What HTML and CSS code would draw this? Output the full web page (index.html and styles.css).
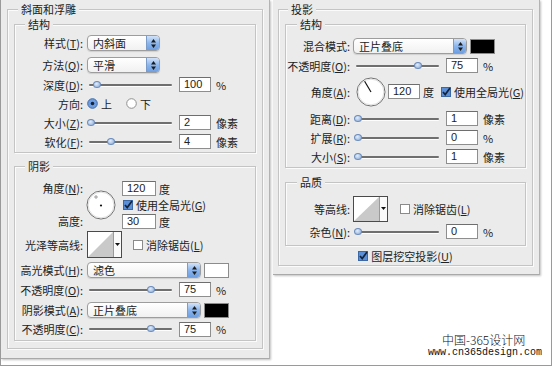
FILE: index.html
```html
<!DOCTYPE html>
<html>
<head>
    <meta charset="utf-8">
    <title>图层样式</title>
    <link rel="stylesheet" href="styles.css">
</head>
<body>
<div class="page">
    <div class="panel panel-left">
        <fieldset class="outer">
            <legend>斜面和浮雕</legend>

            <fieldset class="sub sub-bevel">
                <legend>结构</legend>
                <div class="row row-select first">
                    <span class="lbl">样式(<u>T</u>):</span>
                    <div class="select sel-short"><span class="sel-text">内斜面</span><span class="sel-btn"><svg width="5" height="9" viewBox="0 0 5 9"><path d="M0 3.6 L2.5 0 L5 3.6Z M0 5.4 L2.5 9 L5 5.4Z" fill="#1c1c1c"/></svg></span></div>
                </div>
                <div class="row row-select">
                    <span class="lbl">方法(<u>Q</u>):</span>
                    <div class="select sel-short"><span class="sel-text">平滑</span><span class="sel-btn"><svg width="5" height="9" viewBox="0 0 5 9"><path d="M0 3.6 L2.5 0 L5 3.6Z M0 5.4 L2.5 9 L5 5.4Z" fill="#1c1c1c"/></svg></span></div>
                </div>
                <div class="row">
                    <span class="lbl">深度(<u>D</u>):</span>
                    <div class="slider"><span class="thumb" style="left: 10%"></span></div>
                    <span class="num">100</span><span class="unit">%</span>
                </div>
                <div class="row">
                    <span class="lbl">方向:</span>
                    <svg class="radio" width="11" height="11" viewBox="0 0 11 11"><circle cx="5.5" cy="5.5" r="4.8" fill="#6f9ee0" stroke="#3f6aa8"/><circle cx="5.5" cy="5.5" r="1.8" fill="#14233a"/></svg>
                    <span class="radio-text">上</span>
                    <svg class="radio radio-second" width="11" height="11" viewBox="0 0 11 11"><circle cx="5.5" cy="5.5" r="4.8" fill="#fff" stroke="#8f8f8f"/></svg>
                    <span class="radio-text">下</span>
                </div>
                <div class="row">
                    <span class="lbl">大小(<u>Z</u>):</span>
                    <div class="slider"><span class="thumb" style="left: 3%"></span></div>
                    <span class="num">2</span><span class="unit">像素</span>
                </div>
                <div class="row">
                    <span class="lbl">软化(<u>F</u>):</span>
                    <div class="slider"><span class="thumb" style="left: 27%"></span></div>
                    <span class="num">4</span><span class="unit">像素</span>
                </div>
            </fieldset>

            <fieldset class="sub sub-shade">
                <legend>阴影</legend>
                <div class="angle-block">
                    <span class="lbl lbl-angle">角度(<u>N</u>):</span>
                    <svg class="dial" width="30" height="30" viewBox="0 0 30 30">
                        <circle cx="15" cy="15" r="14" fill="#fff" stroke="#707070"/>
                        <circle cx="15" cy="15" r="12.8" fill="none" stroke="#e2e2e2"/>
                        <path d="M8 7 H12 M10 5 V9" stroke="#8a8a8a" stroke-width="0.8"/>
                        <circle cx="15" cy="15.5" r="1.1" fill="#111"/>
                    </svg>
                    <div class="angle-line line-1"><span class="num num-wide">120</span><span class="unit">度</span></div>
                    <div class="angle-line line-2">
                        <svg class="check" width="10" height="10" viewBox="0 0 10 10"><rect x="0.5" y="0.5" width="9" height="9" fill="#5b8fd8" stroke="#3d68a6"/><path d="M2 5 L4.2 7.6 L9 1" fill="none" stroke="#14233a" stroke-width="1.7"/></svg>
                        <span class="check-text">使用全局光(<u>G</u>)</span>
                    </div>
                    <div class="angle-line line-3"><span class="num num-wide">30</span><span class="unit">度</span></div>
                    <span class="lbl lbl-height">高度:</span>
                </div>
                <div class="row row-contour">
                    <span class="lbl">光泽等高线:</span>
                    <div class="contour">
                        <svg class="contour-pic" width="25" height="25" viewBox="0 0 25 25" preserveAspectRatio="none"><path d="M0 25 L25 0 L25 25Z" fill="#c9c9c9"/></svg>
                        <span class="contour-btn"><svg width="5" height="3" viewBox="0 0 5 3"><path d="M0 0 H5 L2.5 3Z" fill="#111"/></svg></span>
                    </div>
                    <svg class="check contour-check" width="10" height="10" viewBox="0 0 10 10"><rect x="0.5" y="0.5" width="9" height="9" fill="#fff" stroke="#8a8a8a"/></svg>
                    <span class="check-text">消除锯齿(<u>L</u>)</span>
                </div>
                <div class="row row-select tight">
                    <span class="lbl">高光模式(<u>H</u>):</span>
                    <div class="select sel-long"><span class="sel-text">滤色</span><span class="sel-btn"><svg width="5" height="9" viewBox="0 0 5 9"><path d="M0 3.6 L2.5 0 L5 3.6Z M0 5.4 L2.5 9 L5 5.4Z" fill="#1c1c1c"/></svg></span></div>
                    <span class="swatch swatch-white"></span>
                </div>
                <div class="row">
                    <span class="lbl">不透明度(<u>O</u>):</span>
                    <div class="slider"><span class="thumb" style="left: 75%"></span></div>
                    <span class="num">75</span><span class="unit">%</span>
                </div>
                <div class="row row-select tight">
                    <span class="lbl">阴影模式(<u>A</u>):</span>
                    <div class="select sel-long"><span class="sel-text">正片叠底</span><span class="sel-btn"><svg width="5" height="9" viewBox="0 0 5 9"><path d="M0 3.6 L2.5 0 L5 3.6Z M0 5.4 L2.5 9 L5 5.4Z" fill="#1c1c1c"/></svg></span></div>
                    <span class="swatch"></span>
                </div>
                <div class="row row-last">
                    <span class="lbl">不透明度(<u>C</u>):</span>
                    <div class="slider"><span class="thumb" style="left: 75%"></span></div>
                    <span class="num">75</span><span class="unit">%</span>
                </div>
            </fieldset>
        </fieldset>
    </div>

    <div class="side">
        <div class="panel panel-right">
            <fieldset class="outer">
                <legend>投影</legend>

                <fieldset class="sub sub-drop">
                    <legend>结构</legend>
                    <div class="row row-select first">
                        <span class="lbl">混合模式:</span>
                        <div class="select sel-long"><span class="sel-text">正片叠底</span><span class="sel-btn"><svg width="5" height="9" viewBox="0 0 5 9"><path d="M0 3.6 L2.5 0 L5 3.6Z M0 5.4 L2.5 9 L5 5.4Z" fill="#1c1c1c"/></svg></span></div>
                        <span class="swatch"></span>
                    </div>
                    <div class="row">
                        <span class="lbl">不透明度(<u>O</u>):</span>
                        <div class="slider"><span class="thumb" style="left: 75%"></span></div>
                        <span class="num">75</span><span class="unit">%</span>
                    </div>
                    <div class="row row-angle">
                        <span class="lbl">角度(<u>A</u>):</span>
                        <svg class="dial" width="30" height="30" viewBox="0 0 30 30">
                            <circle cx="15" cy="15" r="14" fill="#fff" stroke="#707070"/>
                            <circle cx="15" cy="15" r="12.8" fill="none" stroke="#e2e2e2"/>
                            <path d="M15 15 L8.6 4.3" stroke="#111" stroke-width="1.2"/>
                        </svg>
                        <span class="num angle-num">120</span><span class="unit">度</span>
                        <svg class="check angle-check" width="10" height="10" viewBox="0 0 10 10"><rect x="0.5" y="0.5" width="9" height="9" fill="#5b8fd8" stroke="#3d68a6"/><path d="M2 5 L4.2 7.6 L9 1" fill="none" stroke="#14233a" stroke-width="1.7"/></svg>
                        <span class="check-text">使用全局光(<u>G</u>)</span>
                    </div>
                    <div class="row row-gap">
                        <span class="lbl">距离(<u>D</u>):</span>
                        <div class="slider"><span class="thumb" style="left: 2%"></span></div>
                        <span class="num">1</span><span class="unit">像素</span>
                    </div>
                    <div class="row">
                        <span class="lbl">扩展(<u>R</u>):</span>
                        <div class="slider"><span class="thumb" style="left: 2%"></span></div>
                        <span class="num">0</span><span class="unit">%</span>
                    </div>
                    <div class="row">
                        <span class="lbl">大小(<u>S</u>):</span>
                        <div class="slider"><span class="thumb" style="left: 2%"></span></div>
                        <span class="num">1</span><span class="unit">像素</span>
                    </div>
                </fieldset>

                <fieldset class="sub sub-quality">
                    <legend>品质</legend>
                    <div class="row row-contour">
                        <span class="lbl">等高线:</span>
                        <div class="contour contour-small">
                            <svg class="contour-pic" width="25" height="24" viewBox="0 0 25 25" preserveAspectRatio="none"><path d="M0 25 L25 0 L25 25Z" fill="#c9c9c9"/></svg>
                            <span class="contour-btn"><svg width="5" height="3" viewBox="0 0 5 3"><path d="M0 0 H5 L2.5 3Z" fill="#111"/></svg></span>
                        </div>
                        <svg class="check contour-check" width="10" height="10" viewBox="0 0 10 10"><rect x="0.5" y="0.5" width="9" height="9" fill="#fff" stroke="#8a8a8a"/></svg>
                        <span class="check-text">消除锯齿(<u>L</u>)</span>
                    </div>
                    <div class="row">
                        <span class="lbl">杂色(<u>N</u>):</span>
                        <div class="slider"><span class="thumb" style="left: 2%"></span></div>
                        <span class="num">0</span><span class="unit">%</span>
                    </div>
                </fieldset>

                <div class="knockout">
                    <svg class="check" width="10" height="10" viewBox="0 0 10 10"><rect x="0.5" y="0.5" width="9" height="9" fill="#5b8fd8" stroke="#3d68a6"/><path d="M2 5 L4.2 7.6 L9 1" fill="none" stroke="#14233a" stroke-width="1.7"/></svg>
                    <span class="check-text">图层挖空投影(<u>U</u>)</span>
                </div>
            </fieldset>
        </div>

        <div class="watermark">
            <div class="wm-name">中国-365设计网</div>
            <div class="wm-url">www.cn365design.com</div>
        </div>
    </div>
</div>
</body>
</html>
```

FILE: styles.css
```css
* {
    box-sizing: border-box;
}

body {
    margin: 0;
    background: #fff;
    font-family: "Noto Sans CJK SC", "Liberation Sans", sans-serif;
    font-size: 11px;
    color: #222;
}

u {
    text-decoration: underline;
    text-underline-offset: 1px;
}

.page {
    width: 552px;
    height: 366px;
    display: flex;
    gap: 3px;
    border: 1px solid #9a9a9a;
    border-top: 0;
    overflow: hidden;
}

/* panels */
.panel {
    background: #ebebeb;
    border-right: 1px solid #b3b3b3;
    border-bottom: 1px solid #a9a9a9;
    box-shadow: 1px 1px 2px rgba(0, 0, 0, 0.25);
}

.panel-left {
    width: 269px;
    height: 359px;
    padding: 3px 0 0 6px;
}

.side {
    display: flex;
    flex-direction: column;
    width: 278px;
}

.panel-right {
    width: 267px;
    height: 275px;
    padding: 3px 0 0 5px;
}

/* group boxes */
fieldset {
    margin: 0;
    min-width: 0;
    border: 1px solid #c4c4c4;
    box-shadow: inset 1px 1px 0 #fbfbfb, 1px 1px 0 #fbfbfb;
}

legend {
    padding: 0 3px;
    line-height: 13px;
    background: #ebebeb;
}

.outer {
    width: 256px;
    padding: 0 6px 7px 6px;
}

.outer > legend {
    margin-left: 4px;
}

.panel-right .outer {
    width: 255px;
    padding-bottom: 0;
}

.panel-right .outer > legend {
    margin-left: 3px;
}

.sub {
    padding: 0 0 1px 0;
    margin-top: 2px;
}

.sub > legend {
    margin-left: 10px;
}

.panel-right .sub > legend {
    margin-left: 11px;
}

.sub-shade {
    margin-top: 7px;
    padding-bottom: 2px;
}

.sub-quality {
    margin-top: 8px;
    padding-bottom: 4px;
}

/* rows */
.row {
    display: flex;
    align-items: center;
    height: 19px;
    white-space: nowrap;
}

.row-select {
    height: 20px;
    margin-top: 2px;
}

.row-select.tight {
    margin-top: 1px;
}

.panel-right .row-select.first {
    margin-top: 5px;
}

.row-last {
    height: 18px;
}

.lbl {
    width: 68px;
    text-align: right;
    flex-shrink: 0;
}

.panel-right .lbl {
    width: 64px;
}

/* popup menu */
.select {
    display: flex;
    height: 16px;
    margin-left: 4px;
    border: 1px solid #9d9d9d;
    border-radius: 4px;
    background: linear-gradient(#ffffff, #f1f1f1);
    box-shadow: 0 1px 1px rgba(0, 0, 0, 0.12);
}

.panel-right .select {
    margin-left: 3px;
}

.sel-short {
    width: 73px;
}

.sel-long {
    width: 114px;
}

.sel-text {
    flex: 1;
    padding-left: 5px;
    line-height: 14px;
}

.sel-btn {
    width: 13px;
    display: flex;
    align-items: center;
    justify-content: center;
    border-left: 1px solid #7b9bc8;
    border-radius: 0 3px 3px 0;
    background: linear-gradient(#d2e3f9, #8cb6ec 50%, #6d9fe3);
}

.swatch {
    width: 25px;
    height: 15px;
    margin-left: 3px;
    border: 1px solid #8c8c8c;
    background: #000;
}

.swatch-white {
    background: #fff;
}

/* slider */
.slider {
    position: relative;
    width: 83px;
    height: 2px;
    margin-left: 6px;
    border-radius: 1px;
    background: #6f6f6f;
    box-shadow: 0 1px 0 #fdfdfd;
}

.thumb {
    position: absolute;
    top: -3px;
    width: 8px;
    height: 7px;
    margin-left: -4px;
    border: 1px solid #6b8cbb;
    border-radius: 50%;
    background: radial-gradient(circle at 40% 35%, #e3edf9, #85a9da);
}

.num {
    width: 32px;
    height: 15px;
    margin-left: 7px;
    padding-left: 4px;
    border: 1px solid #8e8e8e;
    border-top-color: #6e6e6e;
    background: #fff;
    font-family: "Liberation Sans", sans-serif;
    font-size: 11px;
    line-height: 13px;
    flex-shrink: 0;
}

.unit {
    margin-left: 5px;
}

/* radio + checkbox */
.radio {
    margin-left: 4px;
}

.radio-second {
    margin-left: 14px;
}

.radio-text {
    margin-left: 3px;
}

.check {
    flex-shrink: 0;
}

.check-text {
    margin-left: 3px;
}

/* angle block, left */
.angle-block {
    display: grid;
    grid-template-columns: 68px 39px auto;
    grid-template-rows: 17px 16px 17px;
    padding-top: 7px;
    white-space: nowrap;
}

.angle-block .lbl {
    line-height: 17px;
}

.lbl-angle {
    grid-row: 1;
    grid-column: 1;
}

.lbl-height {
    grid-row: 3;
    grid-column: 1;
}

.angle-block .dial {
    grid-column: 2;
    grid-row: 1 / 4;
    align-self: center;
    margin-left: 3px;
}

.angle-line {
    grid-column: 3;
    display: flex;
    align-items: center;
}

.line-1 { grid-row: 1; }
.line-2 { grid-row: 2; padding-left: 1px; }
.line-3 { grid-row: 3; }

.num-wide {
    width: 34px;
    margin-left: 0;
}

.angle-block .unit {
    margin-left: 3px;
}

/* angle row, right */
.row-angle {
    height: 33px;
}

.row-angle .dial {
    margin-left: 6px;
}

.angle-num {
    margin-left: 2px;
}

.row-angle .unit {
    margin-left: 3px;
}

.angle-check {
    margin-left: 7px;
}

.row-gap {
    margin-top: 1px;
}

/* contour picker */
.row-contour {
    height: 29px;
}

.sub-quality .row-contour {
    height: 27px;
    margin-top: 6px;
}

.contour {
    display: flex;
    height: 27px;
    margin-left: 4px;
    border: 1px solid #4a4a4a;
    background: #fff;
}

.contour-small {
    height: 26px;
    margin-left: 3px;
}

.contour-pic {
    display: block;
    width: 25px;
    height: 100%;
}

.contour-btn {
    width: 8px;
    display: flex;
    align-items: center;
    justify-content: center;
    border-left: 1px solid #9a9a9a;
    background: #fafafa;
}

.contour-check {
    margin-left: 11px;
}

.sub-quality .contour-check {
    margin-left: 12px;
}

.knockout {
    display: flex;
    align-items: center;
    justify-content: center;
    height: 19px;
}

/* watermark */
.watermark {
    margin-top: auto;
    padding-bottom: 6px;
    color: #111;
}

.wm-name {
    padding-left: 169px;
    font-size: 12px;
    line-height: 14px;
    font-weight: 300;
}

.wm-url {
    padding-left: 155px;
    font-family: "Liberation Mono", monospace;
    font-size: 10px;
    line-height: 12px;
}
```
